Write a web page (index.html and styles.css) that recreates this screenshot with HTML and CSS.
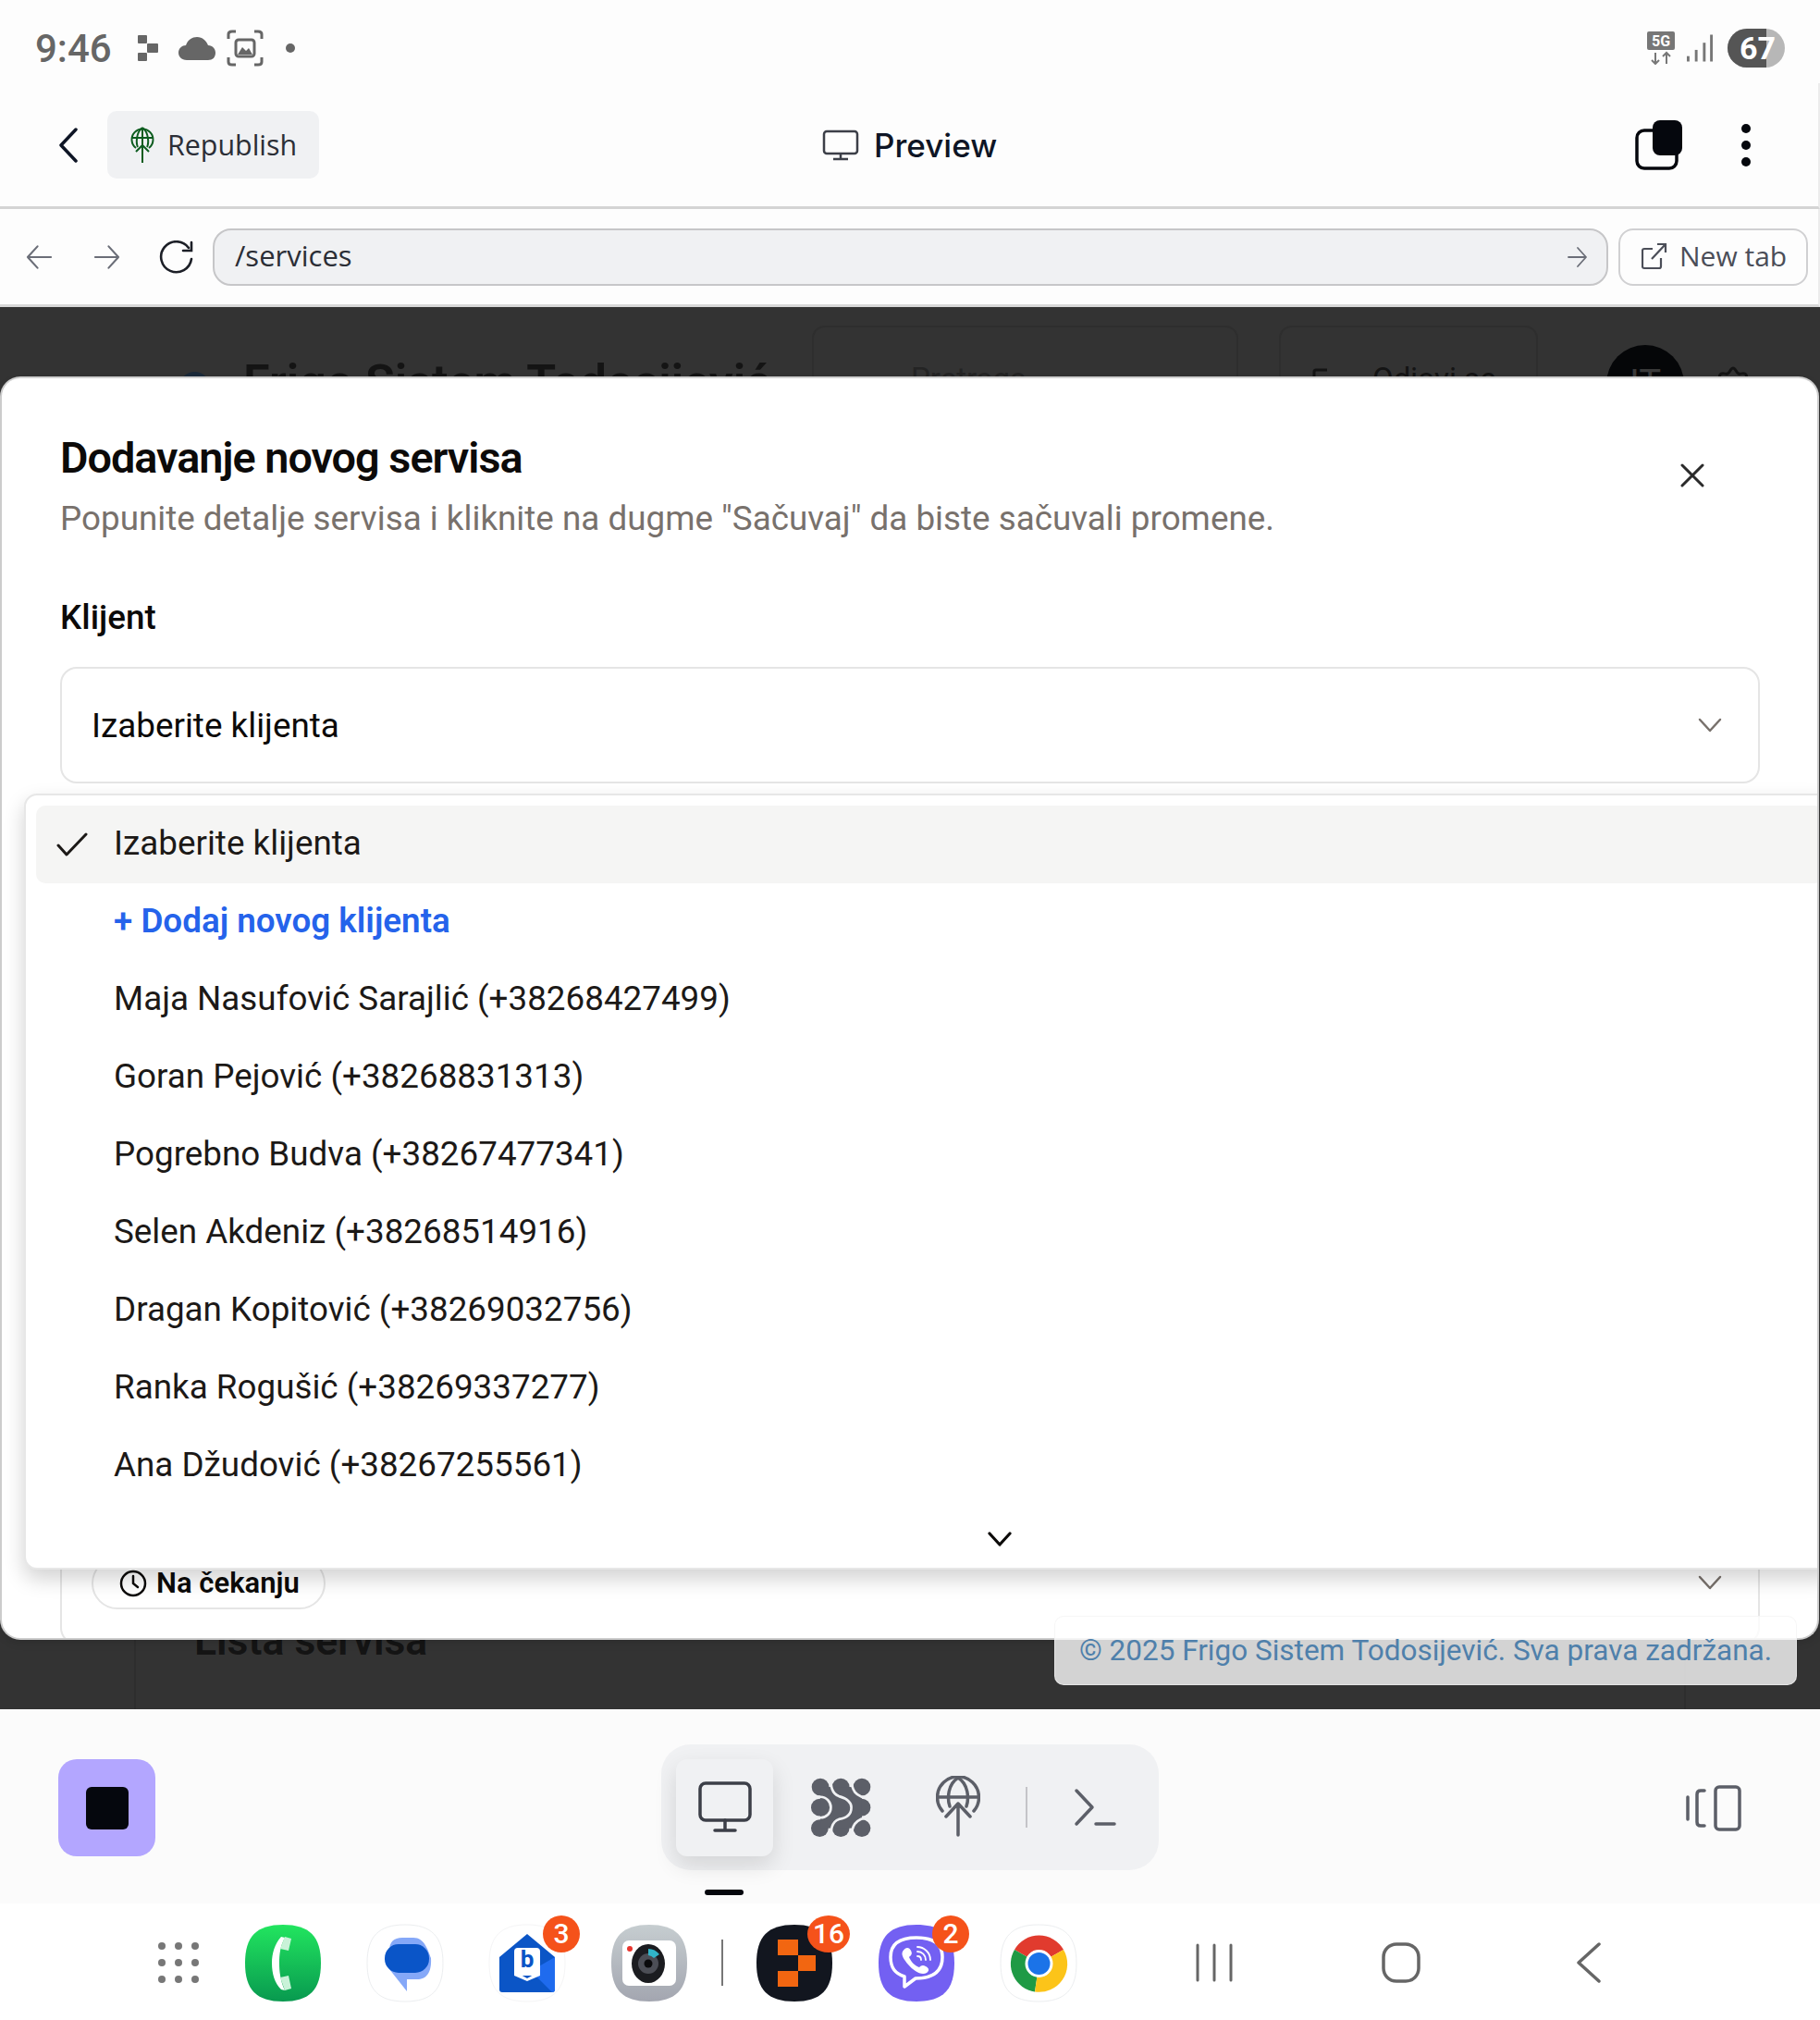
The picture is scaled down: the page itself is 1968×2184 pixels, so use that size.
FILE: index.html
```html
<!DOCTYPE html>
<html lang="en">
<head>
    <meta charset="UTF-8">
    <title>Preview</title>
    <link rel="stylesheet" href="styles.css">
</head>
<body>
    <svg class="defs" width="0" height="0">
        <defs>
            <path id="sq" d="M41 0C70 0 82 13 82 41.500C82 70 70 83 41 83C12 83 0 70 0 41.500C0 13 12 0 41 0Z"/>
            <linearGradient id="green" x1="0" y1="0" x2="0" y2="1"><stop offset="0" stop-color="#22e55f"/><stop offset="1" stop-color="#08994f"/></linearGradient>
            <linearGradient id="grey" x1="0" y1="0" x2="0" y2="1"><stop offset="0" stop-color="#c6cdd0"/><stop offset="1" stop-color="#a3a6b0"/></linearGradient>
        </defs>
    </svg>

    <div class="status-bar">
        <div class="status-left">
            <span class="time">9:46</span>
            <svg class="st-app" viewBox="0 0 24 30" fill="#666"><rect x="1" y="1" width="10" height="9" rx="1"/><rect x="11" y="10" width="12" height="10" rx="1"/><rect x="1" y="20" width="10" height="9" rx="1"/></svg>
            <svg class="st-cloud" viewBox="0 0 42 28" fill="#666"><path d="M10 27C4 27 1 23 1 19C1 14 5 11 9 11C11 5 16 2 21 2C27 2 31 6 33 11C38 11 41 15 41 19C41 24 38 27 33 27Z"/></svg>
            <svg class="st-shot" viewBox="0 0 40 40" fill="none" stroke="#666" stroke-width="3"><path d="M2 10V5Q2 2 6 2H10M30 2H34Q38 2 38 5V10M2 30V35Q2 38 6 38H10M30 38H34Q38 38 38 35V30"/><rect x="10" y="11" width="20" height="18" rx="3"/><path d="M12 27L17 19L21 23L24 20L28 27Z" fill="#666" stroke="none"/></svg>
            <span class="st-dot"></span>
        </div>
        <div class="status-right">
            <svg class="st-5g" viewBox="0 0 30 36"><rect width="30" height="20" rx="2" fill="#777"/><text x="15" y="16" class="st-5g-text" text-anchor="middle">5G</text><path d="M9 23V35M5 31L9 35L13 31M21 35V23M17 27L21 23L25 27" fill="none" stroke="#777" stroke-width="2"/></svg>
            <svg class="st-signal" viewBox="0 0 30 30" fill="#777"><rect x="0" y="24" width="3" height="6"/><rect x="9" y="17" width="3" height="13"/><rect x="18" y="9" width="3" height="21"/><rect x="26" y="0" width="3" height="30"/></svg>
            <div class="battery"><span class="battery-fill"></span><span class="battery-num">67</span></div>
        </div>
    </div>

    <div class="topbar">
        <div class="topbar-left">
            <svg class="back" viewBox="0 0 22 38" fill="none" stroke="#0e1525" stroke-width="3.500" stroke-linecap="round" stroke-linejoin="round"><path d="M19 2L3 19L19 36"/></svg>
            <div class="republish">
                <svg class="republish-icon" viewBox="0 0 26 40" fill="none" stroke="#0d5c1f" stroke-width="2"><path d="M6 23A11.500 11.500 0 1 1 20 23"/><path d="M2 12H24M13 1V39M13 1C6 6 6 18 8 22M13 1C20 6 20 18 18 22M6 27L13 20L20 27"/></svg>
                <span>Republish</span>
            </div>
        </div>
        <div class="topbar-title">
            <svg class="monitor" viewBox="0 0 40 34" fill="none" stroke="#3c3f48" stroke-width="2.500"><rect x="2" y="2" width="36" height="24" rx="3"/><path d="M20 26V32M12 32H28"/></svg>
            <span>Preview</span>
        </div>
        <div class="topbar-right">
            <svg class="tabs-icon" viewBox="0 0 52 54"><rect x="2" y="11" width="43" height="41" rx="8" fill="none" stroke="#05070d" stroke-width="3.500"/><rect x="19" y="0" width="32" height="38" rx="8" fill="#05070d"/></svg>
            <div class="kebab"><span></span><span></span><span></span></div>
        </div>
    </div>

    <div class="urlbar">
        <svg class="nav-arrow" viewBox="0 0 30 28" fill="none" stroke="#6b6e78" stroke-width="2.200" stroke-linecap="round" stroke-linejoin="round"><path d="M28 14H2M13 2L2 14L13 26"/></svg>
        <svg class="nav-arrow" viewBox="0 0 30 28" fill="none" stroke="#6b6e78" stroke-width="2.200" stroke-linecap="round" stroke-linejoin="round"><path d="M2 14H28M17 2L28 14L17 26"/></svg>
        <svg class="reload" viewBox="0 0 40 36" fill="none" stroke="#1c1f27" stroke-width="2.600" stroke-linecap="round"><path d="M33 8A16.500 16.500 0 1 0 36 20"/><path d="M36 2V11H27"/></svg>
        <div class="url-input">
            <span>/services</span>
            <svg class="go" viewBox="0 0 22 24" fill="none" stroke="#6b6e78" stroke-width="1.800" stroke-linecap="round" stroke-linejoin="round"><path d="M1 12H20M11 2L20 12L11 22"/></svg>
        </div>
        <div class="newtab">
            <svg class="newtab-icon" viewBox="0 0 28 30" fill="none" stroke="#4b4e58" stroke-width="2.200"><path d="M12 7H3Q1 7 1 9V26Q1 28 3 28H19Q21 28 21 26V17M11 18L26 2M17 2H26V11"/></svg>
            <span>New tab</span>
        </div>
    </div>

    <div class="stage">
        <div class="behind">
            <div class="behind-head">
                <span class="behind-logo"></span>
                <span class="behind-title">Frigo Sistem Todosijević</span>
                <div class="behind-box behind-search">Pretraga...</div>
                <div class="behind-box behind-logout">
                    <svg class="behind-door" viewBox="0 0 36 40" fill="none" stroke="#141414" stroke-width="3"><path d="M16 2H4Q2 2 2 4V40M14 20H34M26 12L34 20L26 28"/></svg>
                    <span>Odjavi se</span>
                </div>
                <span class="behind-avatar">IT</span>
                <svg class="behind-gear" viewBox="0 0 36 36" fill="none" stroke="#141414" stroke-width="3"><path d="M18 2C21 2 21 7 24 8C27 9 30 6 32 9C34 12 30 15 31 18C32 21 36 22 34 28C32 34 26 32 18 36C10 32 4 34 2 28C0 22 4 21 5 18C6 15 2 12 4 9C6 6 9 9 12 8C15 7 15 2 18 2Z"/></svg>
            </div>
            <h2 class="behind-list">Lista servisa</h2>
        </div>

        <div class="modal">
            <h2 class="modal-title">Dodavanje novog servisa</h2>
            <p class="modal-desc">Popunite detalje servisa i kliknite na dugme "Sačuvaj" da biste sačuvali promene.</p>
            <svg class="close" viewBox="0 0 28 28" fill="none" stroke="#2b2b2b" stroke-width="3" stroke-linecap="round"><path d="M3 3L25 25M25 3L3 25"/></svg>
            <label class="field-label">Klijent</label>
            <div class="select">
                <span>Izaberite klijenta</span>
                <svg class="chev" viewBox="0 0 26 16" fill="none" stroke="#78716c" stroke-width="2.500" stroke-linecap="round" stroke-linejoin="round"><path d="M2 2L13 14L24 2"/></svg>
            </div>
            <div class="select select-status">
                <div class="pill">
                    <svg class="clock" viewBox="0 0 30 30" fill="none" stroke="#0c0a09" stroke-width="2.500" stroke-linecap="round"><circle cx="15" cy="15" r="13"/><path d="M15 7V15L20 19"/></svg>
                    <span>Na čekanju</span>
                </div>
                <svg class="chev" viewBox="0 0 26 16" fill="none" stroke="#78716c" stroke-width="2.500" stroke-linecap="round" stroke-linejoin="round"><path d="M2 2L13 14L24 2"/></svg>
            </div>

            <div class="dropdown">
                <div class="option option-active">
                    <svg class="check" viewBox="0 0 34 28" fill="none" stroke="#1c1917" stroke-width="3" stroke-linecap="round" stroke-linejoin="round"><path d="M2 15L11 25L32 3"/></svg>
                    Izaberite klijenta
                </div>
                <div class="option option-add">+ Dodaj novog klijenta</div>
                <div class="option">Maja Nasufović Sarajlić (+38268427499)</div>
                <div class="option">Goran Pejović (+38268831313)</div>
                <div class="option">Pogrebno Budva (+38267477341)</div>
                <div class="option">Selen Akdeniz (+38268514916)</div>
                <div class="option">Dragan Kopitović (+38269032756)</div>
                <div class="option">Ranka Rogušić (+38269337277)</div>
                <div class="option">Ana Džudović (+38267255561)</div>
                <div class="scroll-more">
                    <svg class="more" viewBox="0 0 26 18" fill="none" stroke="#0c0a09" stroke-width="3.200" stroke-linecap="round" stroke-linejoin="round"><path d="M2 3L13 15L24 3"/></svg>
                </div>
            </div>
        </div>

        <div class="toast">© 2025 Frigo Sistem Todosijević. Sva prava zadržana.</div>
    </div>

    <div class="toolbar">
        <div class="stop"><span></span></div>
        <div class="tools">
            <div class="tool tool-active">
                <svg class="tool-monitor" viewBox="0 0 58 56" fill="none" stroke="#3c3f48" stroke-width="3.500" stroke-linecap="round"><rect x="2" y="2" width="54" height="40" rx="6"/><path d="M29 42V53M18 53H40"/></svg>
            </div>
            <div class="tool">
                <svg class="tool-mesh" viewBox="22 22 194 194">
                    <g fill="#5c5f68">
                        <circle cx="52" cy="52" r="28"/><circle cx="118" cy="52" r="28"/><circle cx="186" cy="52" r="28"/>
                        <circle cx="50" cy="118" r="28"/><circle cx="186" cy="118" r="28"/>
                        <circle cx="50" cy="185" r="28"/><circle cx="118" cy="185" r="28"/><circle cx="186" cy="185" r="28"/>
                        <rect x="52" y="52" width="134" height="133"/>
                    </g>
                    <g fill="none" stroke="#f0f1f3" stroke-width="8">
                        <path d="M85 20C86 50 88 72 112 82C140 90 152 100 152 118C152 140 138 152 112 156C88 164 86 190 85 222"/>
                        <path d="M152 20C152 60 160 86 220 90"/>
                        <path d="M152 222C152 180 160 152 220 148"/>
                        <path d="M10 84H52C72 84 86 100 86 118C86 136 72 151 52 151H10"/>
                    </g>
                </svg>
            </div>
            <div class="tool">
                <svg class="tool-globe" viewBox="0 0 48 68" fill="none" stroke="#5c5f68" stroke-width="3.500" stroke-linecap="round" stroke-linejoin="round"><path d="M7 38A22.500 22.500 0 1 1 41 38"/><path d="M2 23H46M24 2C13 9 12 24 15 33M24 2C35 9 36 24 33 33M24 30V64M11 44L24 30L37 44"/></svg>
            </div>
            <span class="tool-sep"></span>
            <svg class="tool-term" viewBox="0 0 46 42" fill="none" stroke="#5c5f68" stroke-width="3.500" stroke-linecap="round" stroke-linejoin="round"><path d="M3 3L20 21L3 39M24 39H44"/></svg>
        </div>
        <svg class="panel-toggle" viewBox="0 0 60 50" fill="none" stroke="#5c5f68" stroke-width="3.500" stroke-linecap="round"><path d="M2 13V37M20 6H16Q12 6 12 10V40Q12 44 16 44H20"/><rect x="32" y="2" width="26" height="46" rx="4"/></svg>
        <span class="handle"></span>
    </div>

    <div class="dock">
        <div class="grid-dots"><span></span><span></span><span></span><span></span><span></span><span></span><span></span><span></span><span></span></div>
        <div class="app">
            <svg viewBox="0 0 82 83"><use href="#sq" fill="url(#green)"/><path d="M39 13C32 21 29 31 29 41.500C29 53 32 63 39 70L43 71C38 60 37 50 37 41.500C37 32 38 23 43 14Z" fill="#fff"/><path d="M43 13L50 15L47 28L38 26ZM38 57L47 55L50 69L43 71Z" fill="#c9f2d8"/></svg>
        </div>
        <div class="app">
            <svg viewBox="0 0 82 83"><use href="#sq" fill="#fff" stroke="#eceef0"/><path d="M24 28Q24 14 38 14H50C62 14 66 28 69 36C70 52 64 59 54 59H43V72L24 48Z" fill="#85a8f8"/><rect x="19" y="21" width="48" height="31" rx="15" fill="#0a55c8"/></svg>
        </div>
        <div class="app">
            <svg viewBox="0 0 82 83"><use href="#sq" fill="#fff" stroke="#f5f5f6"/><path d="M11 35L41 10L71 35V70Q71 73 68 73H14Q11 73 11 70Z" fill="#0b55c6"/><path d="M71 35V70Q71 73 68 73L45 50Z" fill="#1f6bee"/><rect x="27" y="25" width="28" height="30" rx="4" fill="#fff"/><path d="M27 50L41 58L55 50V55L41 61L27 55Z" fill="#fff"/><text x="41" y="46" class="mail-b" text-anchor="middle">b</text></svg>
            <span class="badge">3</span>
        </div>
        <div class="app">
            <svg viewBox="0 0 82 83"><use href="#sq" fill="url(#grey)"/><rect x="12" y="17" width="58" height="49" rx="7" fill="#fff"/><circle cx="20" cy="26" r="3" fill="#e8352e"/><ellipse cx="40" cy="42" rx="18" ry="21" fill="#1b1c20"/><circle cx="40" cy="42" r="11" fill="#4c4e56"/><circle cx="40" cy="42" r="4.500" fill="#0a0a0c"/><path d="M40 26A16 16 0 0 1 52 32L46 36A9 9 0 0 0 40 33Z" fill="#31b5c9"/></svg>
        </div>
        <span class="dock-sep"></span>
        <div class="app">
            <svg viewBox="0 0 82 83"><use href="#sq" fill="#12161f"/><rect x="23" y="16" width="22" height="17" fill="#f26611"/><rect x="45" y="33" width="19" height="17" fill="#f26611"/><rect x="23" y="50" width="22" height="17" fill="#f26611"/></svg>
            <span class="badge badge-wide">16</span>
        </div>
        <div class="app">
            <svg viewBox="0 0 82 83"><use href="#sq" fill="#7360f2"/><path d="M41 14C59 14 69 20 69 35C69 51 59 58 40 58L28 67V56C18 53 13 47 13 35C13 20 23 14 41 14Z" fill="none" stroke="#fff" stroke-width="3.500" stroke-linejoin="round"/><path d="M26 29C29 24 33 24 35 28C37 32 35 33 33 35C35 40 39 44 44 46C46 44 48 43 51 45C55 47 55 50 52 52C46 55 38 50 32 43C28 38 24 33 26 29Z" fill="#fff"/><path d="M42 24C49 24 56 30 56 38M42 29C47 29 51 33 51 38M42 34C45 34 46 36 46 38" fill="none" stroke="#fff" stroke-width="1.800" stroke-linecap="round"/></svg>
            <span class="badge">2</span>
        </div>
        <div class="app">
            <svg viewBox="0 0 82 83"><use href="#sq" fill="#fff" stroke="#eceef0"/><path d="M41.500 42L15 27A30.500 30.500 0 0 1 68 27Z" fill="#e13b2e"/><path d="M41.500 42L15 27A30.500 30.500 0 0 0 37 72.500Z" fill="#1f9a45"/><path d="M41.500 42L37 72.500A30.500 30.500 0 0 0 68 27Z" fill="#fcc419"/><circle cx="41.500" cy="42" r="15" fill="#fff"/><circle cx="41.500" cy="42" r="12" fill="#1b73e8"/></svg>
        </div>
        <svg class="nav-recents" viewBox="0 0 40 42" fill="none" stroke="#666" stroke-width="3" stroke-linecap="round"><path d="M2 2V40M20 2V40M38 2V40"/></svg>
        <svg class="nav-home" viewBox="0 0 44 44" fill="none" stroke="#666" stroke-width="3.500"><rect x="2" y="2" width="38" height="40" rx="14"/></svg>
        <svg class="nav-back" viewBox="0 0 28 44" fill="none" stroke="#666" stroke-width="3.500" stroke-linecap="round" stroke-linejoin="round"><path d="M25 2L3 22L25 42"/></svg>
    </div>
</body>
</html>
```

FILE: styles.css
```css
* {
    box-sizing: border-box;
}
html, body {
    margin: 0;
    padding: 0;
}
body {
    width: 1968px;
    height: 2184px;
    overflow: hidden;
    display: flex;
    flex-direction: column;
    font-family: Roboto, "Liberation Sans", sans-serif;
    background-color: #fdfdfd;
    color: #0c0a09;
}
svg {
    display: block;
    flex: none;
}
.defs {
    position: absolute;
}

/* status bar */
.status-bar {
    height: 90px;
    padding: 14px 38px 0;
    display: flex;
    align-items: center;
    justify-content: space-between;
}
.status-left, .status-right {
    display: flex;
    align-items: center;
}
.time {
    font-size: 42px;
    font-weight: 500;
    color: #666;
    margin-right: 27px;
}
.st-app {
    width: 24px;
    height: 30px;
    margin-right: 20px;
}
.st-cloud {
    width: 42px;
    height: 28px;
    margin-right: 11px;
}
.st-shot {
    width: 40px;
    height: 40px;
    margin-right: 24px;
}
.st-dot {
    width: 10px;
    height: 10px;
    border-radius: 50%;
    background-color: #666;
}
.st-5g {
    width: 30px;
    height: 36px;
    margin-right: 13px;
}
.st-5g-text {
    font-size: 16px;
    font-weight: 700;
    fill: #fff;
}
.st-signal {
    width: 29px;
    height: 30px;
    margin-right: 15px;
}
.battery {
    position: relative;
    width: 62px;
    height: 42px;
    border-radius: 21px;
    overflow: hidden;
    background-color: #b7b7b7;
}
.battery-fill {
    display: block;
    width: 42px;
    height: 42px;
    background-color: #555;
}
.battery-num {
    position: absolute;
    left: 13px;
    top: 0;
    line-height: 42px;
    font-size: 34px;
    font-weight: 700;
    color: #fff;
}

/* replit header */
.topbar {
    height: 136px;
    border-right: 2px solid #ececec;
    border-bottom: 3px solid #d4d4d4;
    display: flex;
    align-items: center;
    padding: 0 73px 0 63px;
    position: relative;
}
.topbar-left {
    display: flex;
    align-items: center;
}
.back {
    width: 22px;
    height: 38px;
    margin-right: 31px;
}
.republish {
    width: 229px;
    height: 73px;
    border-radius: 10px;
    background-color: #f0f1f3;
    display: flex;
    align-items: center;
    padding-left: 25px;
    gap: 14px;
    font-family: "Open Sans", sans-serif;
    font-size: 30.400px;
    color: #2b2e36;
}
.republish-icon {
    width: 26px;
    height: 40px;
}
.topbar-title {
    position: absolute;
    left: 889px;
    top: 0;
    bottom: 0;
    display: flex;
    align-items: center;
    gap: 16px;
    font-family: Inter, sans-serif;
    font-size: 35px;
    font-weight: 500;
    color: #0e1525;
}
.monitor {
    width: 40px;
    height: 34px;
}
.topbar-right {
    margin-left: auto;
    display: flex;
    align-items: center;
    gap: 63px;
}
.tabs-icon {
    width: 52px;
    height: 54px;
}
.kebab {
    display: flex;
    flex-direction: column;
    gap: 8px;
}
.kebab span {
    width: 10px;
    height: 10px;
    border-radius: 50%;
    background-color: #05070d;
}

/* url row */
.urlbar {
    height: 106px;
    border-right: 2px solid #ececec;
    border-bottom: 3px solid #d8d8d8;
    display: flex;
    align-items: center;
    padding: 0 11px 0 28px;
}
.nav-arrow {
    width: 29px;
    height: 28px;
    margin-right: 44px;
}
.reload {
    width: 40px;
    height: 36px;
    margin-left: -3px;
    margin-right: 19px;
}
.url-input {
    flex: 1;
    height: 62px;
    border: 2px solid #c6c6c8;
    border-radius: 20px;
    background-color: #f0f1f3;
    display: flex;
    align-items: center;
    justify-content: space-between;
    padding: 0 20px 3px 22px;
    font-family: "Open Sans", sans-serif;
    font-size: 31px;
    color: #2b2e36;
}
.go {
    width: 22px;
    height: 24px;
    margin-top: 3px;
}
.newtab {
    width: 205px;
    height: 62px;
    margin-left: 11px;
    border: 2px solid #d0d0d2;
    border-radius: 16px;
    display: flex;
    align-items: center;
    padding: 0 0 2px 23px;
    gap: 13px;
    font-family: "Open Sans", sans-serif;
    font-size: 30px;
    color: #4b4e58;
}
.newtab-icon {
    width: 28px;
    height: 30px;
}

/* dimmed page and modal */
.stage {
    height: 1516px;
    position: relative;
    overflow: hidden;
    background-color: #333;
}
.behind {
    position: relative;
    height: 100%;
    margin: 0 145px;
}
.behind::after {
    content: "";
    position: absolute;
    left: 0;
    right: 0;
    top: 1000px;
    bottom: 0;
    border-left: 2px solid #2e2e2e;
    border-right: 2px solid #2e2e2e;
}
.behind-head {
    display: flex;
    align-items: flex-start;
    padding-top: 20px;
    color: #141414;
}
.behind-head > * {
    flex: none;
}
.behind-logo {
    width: 33px;
    height: 33px;
    margin: 50px 0 0 49px;
    border-radius: 50%;
    background-color: #1b2a3a;
}
.behind-title {
    margin: 31px 0 0 36px;
    font-size: 52px;
    font-weight: 600;
    width: 615px;
    white-space: nowrap;
}
.behind-box {
    height: 90px;
    border: 2px solid #2e2e2e;
    border-radius: 14px;
    font-size: 33px;
    padding-top: 36px;
    color: #242424;
}
.behind-search {
    width: 461px;
    padding-left: 105px;
}
.behind-logout {
    width: 280px;
    margin-left: 44px;
    padding-left: 34px;
    display: flex;
    align-items: flex-start;
    gap: 29px;
    color: #141414;
}
.behind-door {
    width: 36px;
    height: 40px;
    margin-top: 8px;
}
.behind-avatar {
    width: 84px;
    height: 84px;
    margin: 21px 0 0 74px;
    border-radius: 50%;
    background-color: #050608;
    color: #3a3a3a;
    font-size: 40px;
    text-align: center;
    line-height: 84px;
}
.behind-gear {
    width: 36px;
    height: 36px;
    margin: 44px 0 0 35px;
}
.behind-list {
    position: absolute;
    left: 65px;
    top: 1417px;
    margin: 0;
    font-size: 44.500px;
    line-height: 50px;
    font-weight: 600;
    color: #141414;
}
.modal {
    position: absolute;
    left: 0;
    right: 1px;
    top: 75px;
    height: 1366px;
    padding: 58px 62px 0 66px;
    background-color: #fff;
    border: 2px solid #ccc;
    border-top-color: #d0d0d0;
    border-radius: 22px;
    overflow: hidden;
    box-shadow: 0 4px 8px rgba(0, 0, 0, 0.1);
}
.modal-title {
    margin: 0 0 0 -3px;
    font-size: 46.800px;
    line-height: 56px;
    font-weight: 600;
    letter-spacing: -1px;
}
.modal-desc {
    margin: 14px 0 0 -3px;
    font-size: 36.800px;
    line-height: 48px;
    color: #78716c;
}
.close {
    position: absolute;
    left: 1814px;
    top: 91px;
    width: 28px;
    height: 28px;
}
.field-label {
    display: block;
    margin: 61px 0 0 -3px;
    font-size: 36.800px;
    line-height: 44px;
    font-weight: 500;
}
.select {
    margin: 31px 0 0 -3px;
    height: 126px;
    border: 2px solid #e5e5e5;
    border-radius: 18px;
    display: flex;
    align-items: center;
    justify-content: space-between;
    padding: 0 39px 0 32px;
    font-size: 36.800px;
}
.chev {
    width: 26px;
    height: 16px;
}
.select-status {
    margin-top: 796px;
    height: 135px;
}
.pill {
    height: 56px;
    padding: 0 26px 0 28px;
    margin-top: 2px;
    border: 2px solid #e5e5e5;
    border-radius: 28px;
    display: flex;
    align-items: center;
    gap: 10px;
    font-size: 31px;
    font-weight: 600;
}
.clock {
    width: 30px;
    height: 30px;
}
.dropdown {
    position: absolute;
    left: 24px;
    right: -20px;
    top: 449px;
    height: 839px;
    padding: 11px 11px 0;
    background-color: #fff;
    border: 2px solid #e7e7e7;
    border-radius: 14px;
    box-shadow: 0 10px 22px rgba(0, 0, 0, 0.18);
}
.option {
    position: relative;
    height: 84px;
    padding-left: 84px;
    font-size: 36.800px;
    line-height: 82px;
    color: #1c1917;
    white-space: nowrap;
}
.option-active {
    background-color: #f5f5f4;
    border-radius: 10px;
}
.option-add {
    color: #2563eb;
    font-weight: 600;
}
.check {
    position: absolute;
    left: 22px;
    top: 28px;
    width: 34px;
    height: 28px;
}
.scroll-more {
    height: 62px;
    display: flex;
    align-items: center;
    justify-content: flex-start;
    padding: 12px 0 0 1029px;
}
.more {
    width: 26px;
    height: 18px;
}
.toast {
    position: absolute;
    left: 1140px;
    top: 1415px;
    width: 803px;
    height: 75px;
    display: flex;
    align-items: center;
    justify-content: center;
    font-size: 31.500px;
    color: #4f80ab;
    background-color: rgba(255, 255, 255, 0.79);
    border: 1px solid rgba(240, 240, 240, 0.6);
    border-radius: 10px;
}

/* replit bottom toolbar */
.toolbar {
    height: 210px;
    position: relative;
    background-color: #fbfbfb;
    display: flex;
    padding: 38px 85px 0 63px;
    align-items: flex-start;
    justify-content: space-between;
}
.stop {
    width: 105px;
    height: 105px;
    margin-top: 16px;
    border-radius: 20px;
    background-color: #b3a6ff;
    display: flex;
    align-items: center;
    justify-content: center;
}
.stop span {
    width: 46px;
    height: 46px;
    border-radius: 6px;
    background-color: #05070d;
}
.tools {
    position: absolute;
    left: 715px;
    top: 38px;
    width: 538px;
    height: 136px;
    border-radius: 32px;
    background-color: #f0f1f3;
    display: flex;
    align-items: center;
    padding-left: 16px;
}
.tool {
    width: 105px;
    height: 105px;
    margin-right: 21px;
    display: flex;
    align-items: center;
    justify-content: center;
}
.tool-active {
    border-radius: 12px;
    background-color: #f0f1f3;
    box-shadow: 0 10px 24px rgba(0, 0, 0, 0.12);
}
.tool-monitor {
    width: 58px;
    height: 56px;
}
.tool-mesh {
    width: 65px;
    height: 65px;
}
.tool-globe {
    width: 48px;
    height: 68px;
}
.tool-sep {
    width: 2px;
    height: 44px;
    margin-right: 50px;
    background-color: #c4c4c8;
}
.tool-term {
    width: 46px;
    height: 42px;
}
.panel-toggle {
    width: 60px;
    height: 50px;
    margin-top: 44px;
}
.handle {
    position: absolute;
    left: 762px;
    top: 195px;
    width: 42px;
    height: 6px;
    border-radius: 3px;
    background-color: #05070d;
}

/* android dock */
.dock {
    height: 126px;
    background-color: #fff;
    display: flex;
    align-items: center;
    padding: 2px 0 0 171px;
}
.grid-dots {
    width: 44px;
    height: 44px;
    display: grid;
    grid-template-columns: repeat(3, 8px);
    grid-template-rows: repeat(3, 8px);
    justify-content: space-between;
    align-content: space-between;
    margin-right: 50px;
}
.grid-dots span {
    border-radius: 50%;
    background-color: #777;
}
.app {
    position: relative;
    width: 82px;
    height: 83px;
    margin-right: 50px;
}
.app svg {
    width: 82px;
    height: 83px;
    overflow: visible;
}
.mail-b {
    font-size: 26px;
    font-weight: 700;
    fill: #0b55c6;
}
.badge {
    position: absolute;
    right: -16px;
    top: -10px;
    width: 40px;
    height: 40px;
    border-radius: 50%;
    background-color: #f5521a;
    color: #fff;
    font-size: 30px;
    font-weight: 500;
    line-height: 40px;
    text-align: center;
}
.badge-wide {
    width: 46px;
    right: -19px;
}
.dock-sep {
    width: 2px;
    height: 50px;
    margin: 0 36px 0 -13px;
    background-color: #777;
}
.nav-recents {
    width: 40px;
    height: 42px;
    margin-left: 79px;
}
.nav-home {
    width: 44px;
    height: 44px;
    margin-left: 161px;
}
.nav-back {
    width: 28px;
    height: 44px;
    margin-left: 166px;
}
```
